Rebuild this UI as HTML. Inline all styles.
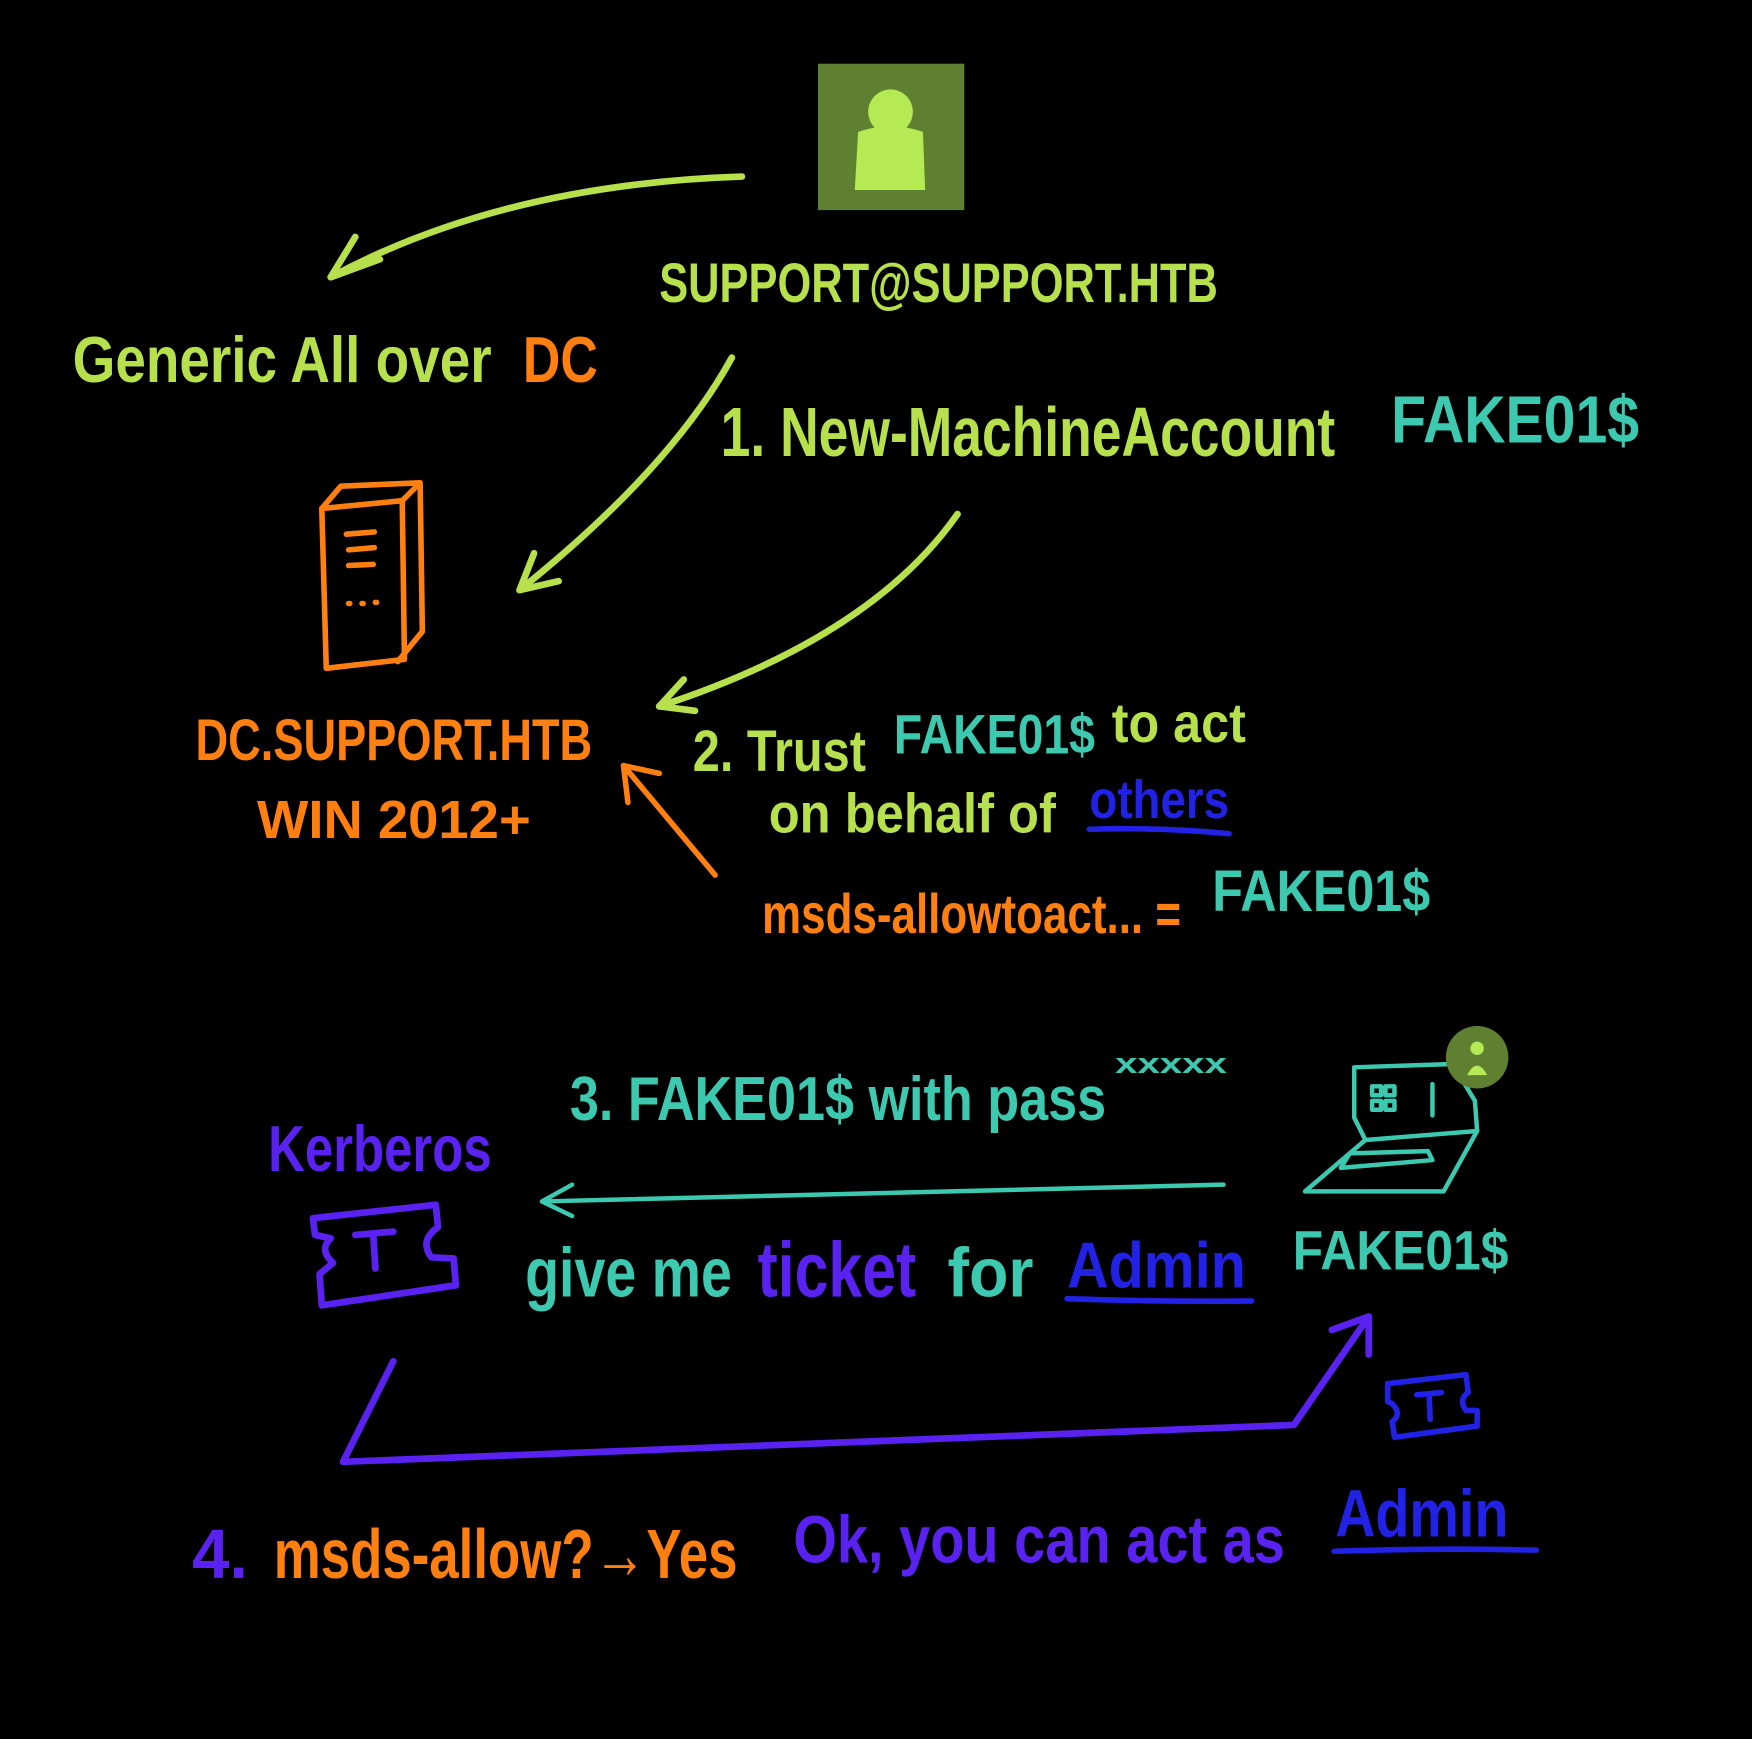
<!DOCTYPE html>
<html><head><meta charset="utf-8"><style>
html,body{margin:0;padding:0;background:#000;}
svg{display:block;}
text{font-family:"Liberation Sans",sans-serif;font-weight:bold;}
</style></head><body>
<svg width="1752" height="1739" viewBox="0 0 1568 1556" preserveAspectRatio="none" xmlns="http://www.w3.org/2000/svg">
<rect width="1568" height="1556" fill="#000"/>
<g fill="none" stroke-linecap="round" stroke-linejoin="round">
<!-- user box -->
<rect x="732" y="57" width="131" height="131" fill="#5f8030" stroke="none"/>
<circle cx="797" cy="100" r="20" fill="#b6ea55" stroke="none"/>
<path d="M768 118 Q797 108 826 118 L828 170 L765 170 Z" fill="#b6ea55" stroke="none"/>
<!-- lime arrows -->
<g stroke="#b6e04c" stroke-width="6">
<path d="M664 158 Q450 165 296 248"/>
<path d="M296 248 L340 232 M296 248 L318 212"/>
<path d="M655 320 Q600 420 465 528"/>
<path d="M465 528 L500 520 M465 528 L478 495"/>
<path d="M857 460 Q780 570 590 632"/>
<path d="M590 632 L622 636 M590 632 L612 608"/>
</g>
<!-- server -->
<g stroke="#ff7f10" stroke-width="5">
<path d="M292 598 L288 455 L360 448 L362 590 Z"/>
<path d="M288 455 L305 435 L376 432 L360 448 M376 432 L378 565 L356 592"/>
<path d="M310 478 L335 476 M312 492 L335 490 M312 506 L334 505 M312 540 L313 540 M324 540 L325 540 M336 539 L337 539"/>
<path d="M640 783 L558 685 M558 685 L562 718 M558 685 L590 692"/>
</g>
<!-- laptop -->
<g stroke="#3cc9b0" stroke-width="4">
<path d="M1212 955 L1300 952 L1320 985 L1322 1012 L1222 1020 L1212 1000 Z"/>
<path d="M1222 1020 L1168 1066 L1292 1066 L1322 1012"/>
<path d="M1200 1045 L1282 1038 L1278 1030 L1208 1032 Z"/>
<path d="M1228 972 h8 v8 h-8z M1240 972 h8 v8 h-8z M1228 985 h8 v8 h-8z M1240 985 h8 v8 h-8z M1282 970 v28"/>
</g>
<circle cx="1322" cy="946" r="28" fill="#5f8030"/>
<circle cx="1322" cy="938" r="6" fill="#b6ea55"/>
<path d="M1313 962 Q1322 945 1331 962 Z" fill="#b6ea55"/>
<!-- tickets -->
<g stroke="#5a22f0" stroke-width="6">
<path d="M280 1090 L390 1078 L392 1098 Q375 1110 386 1125 L406 1126 L408 1150 L288 1168 L286 1140 L298 1130 Q285 1118 296 1108 L282 1105 Z"/>
<path d="M318 1105 L352 1102 M334 1104 L336 1135"/>
<path d="M352 1218 L307 1308 L1158 1275 L1225 1178 M1225 1178 L1192 1190 M1225 1178 L1225 1212"/>
</g>
<g stroke="#2222e6" stroke-width="5">
<path d="M1242 1238 L1312 1230 L1314 1246 Q1305 1252 1312 1262 L1322 1262 L1322 1276 L1248 1286 L1246 1272 Q1255 1265 1246 1256 L1242 1254 Z"/>
<path d="M1268 1248 L1290 1246 M1279 1247 L1280 1270"/>
<path d="M975 742 Q1040 740 1100 746 M955 1162 Q1040 1165 1120 1164 M1194 1388 Q1280 1385 1375 1387"/>
</g>
<path d="M1095 1060 L485 1075 M485 1075 L512 1060 M485 1075 L512 1088" stroke="#3cc9b0" stroke-width="4"/>
</g>
<!-- text -->
<g font-size="50">
<text x="590" y="270" fill="#b6e04c" textLength="500" lengthAdjust="spacingAndGlyphs">SUPPORT@SUPPORT.HTB</text>
<text x="65" y="342" fill="#b6e04c" font-size="58" textLength="375" lengthAdjust="spacingAndGlyphs">Generic All over</text>
<text x="468" y="342" fill="#ff7f10" font-size="58" textLength="67" lengthAdjust="spacingAndGlyphs">DC</text>
<text x="645" y="408" fill="#b6e04c" font-size="62" textLength="550" lengthAdjust="spacingAndGlyphs">1. New-MachineAccount</text>
<text x="1245" y="396" fill="#3cc9b0" font-size="60" textLength="222" lengthAdjust="spacingAndGlyphs">FAKE01$</text>
<text x="175" y="680" fill="#ff7f10" font-size="52" textLength="355" lengthAdjust="spacingAndGlyphs">DC.SUPPORT.HTB</text>
<text x="230" y="750" fill="#ff7f10" font-size="48" textLength="245" lengthAdjust="spacingAndGlyphs">WIN 2012+</text>
<text x="620" y="690" fill="#b6e04c" font-size="52" textLength="155" lengthAdjust="spacingAndGlyphs">2. Trust</text>
<text x="800" y="674" fill="#3cc9b0" font-size="50" textLength="180" lengthAdjust="spacingAndGlyphs">FAKE01$</text>
<text x="995" y="664" fill="#b6e04c" font-size="50" textLength="120" lengthAdjust="spacingAndGlyphs">to act</text>
<text x="688" y="745" fill="#b6e04c" font-size="50" textLength="257" lengthAdjust="spacingAndGlyphs">on behalf of</text>
<text x="975" y="732" fill="#2222e6" font-size="48" textLength="125" lengthAdjust="spacingAndGlyphs">others</text>
<text x="682" y="835" fill="#ff7f10" font-size="50" textLength="375" lengthAdjust="spacingAndGlyphs">msds-allowtoact... =</text>
<text x="1085" y="815" fill="#3cc9b0" font-size="52" textLength="195" lengthAdjust="spacingAndGlyphs">FAKE01$</text>
<text x="510" y="1002" fill="#3cc9b0" font-size="56" textLength="480" lengthAdjust="spacingAndGlyphs">3. FAKE01$ with pass</text>
<text x="998" y="960" fill="#3cc9b0" font-size="26" textLength="100" lengthAdjust="spacingAndGlyphs">xxxxx</text>
<text x="240" y="1048" fill="#5a22f0" font-size="58" textLength="200" lengthAdjust="spacingAndGlyphs">Kerberos</text>
<text x="470" y="1160" fill="#3cc9b0" font-size="62" textLength="185" lengthAdjust="spacingAndGlyphs">give me</text>
<text x="678" y="1160" fill="#5a22f0" font-size="70" textLength="142" lengthAdjust="spacingAndGlyphs">ticket</text>
<text x="848" y="1160" fill="#3cc9b0" font-size="62" textLength="77" lengthAdjust="spacingAndGlyphs">for</text>
<text x="955" y="1152" fill="#2222e6" font-size="58" textLength="160" lengthAdjust="spacingAndGlyphs">Admin</text>
<text x="1157" y="1136" fill="#3cc9b0" font-size="50" textLength="193" lengthAdjust="spacingAndGlyphs">FAKE01$</text>
<text x="172" y="1412" fill="#5a22f0" font-size="62" textLength="50" lengthAdjust="spacingAndGlyphs">4.</text>
<text x="245" y="1412" fill="#ff7f10" font-size="62" textLength="415" lengthAdjust="spacingAndGlyphs">msds-allow?→Yes</text>
<text x="710" y="1398" fill="#5a22f0" font-size="60" textLength="440" lengthAdjust="spacingAndGlyphs">Ok, you can act as</text>
<text x="1195" y="1375" fill="#2222e6" font-size="60" textLength="155" lengthAdjust="spacingAndGlyphs">Admin</text>
</g>
</svg>
</body></html>
